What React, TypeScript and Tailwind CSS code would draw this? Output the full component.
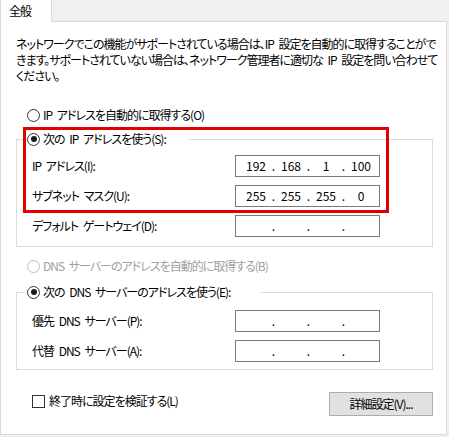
import React from "react";

const font = "font-['Noto_Sans_CJK_JP','Noto_Sans',sans-serif] [font-feature-settings:'palt'] tracking-[-1px] [word-spacing:3px]";

function Radio({ checked, disabled }: { checked?: boolean; disabled?: boolean }) {
  return (
    <span
      className={`w-[13px] h-[13px] rounded-full border flex items-center justify-center shrink-0 bg-white ${
        disabled ? "border-[#bcbcbc]" : "border-[#333333]"
      }`}
    >
      {checked && <span className="w-[6px] h-[6px] rounded-full bg-[#1a1a1a]" />}
    </span>
  );
}

function IpBox({ parts }: { parts?: string[] }) {
  const p = parts || ["", "", "", ""];
  return (
    <div className="w-[145px] h-[22px] border border-[#7a7a7a] bg-white flex items-center pl-[5px] text-[12px] leading-none tracking-normal">
      {p.map((v, i) => (
        <React.Fragment key={i}>
          <span className="w-[30px] text-center">{v}</span>
          {i < 3 && <span className="w-[5px] text-center">.</span>}
        </React.Fragment>
      ))}
    </div>
  );
}

function Row({ label, parts }: { label: string; parts?: string[] }) {
  return (
    <div className="flex items-center h-[22px]">
      <span className="w-[203px] whitespace-nowrap">{label}</span>
      <IpBox parts={parts} />
    </div>
  );
}

export default function App() {
  return (
    <div className={`w-[449px] h-[437px] bg-[#f0f0f0] text-[12px] leading-[16px] text-black relative overflow-hidden ${font}`}>
      {/* tabs */}
      <div className="flex h-[22px]">
        <div className="w-[52px] bg-white border-l border-r border-[#d9d9d9] pl-[8px] pt-[3px]">全般</div>
        <div className="w-[395px] border-b border-[#d9d9d9]" />
      </div>

      {/* panel */}
      <div className="w-[447px] h-[413px] bg-white border-l border-r border-b border-[#d9d9d9] relative">
        <p className="pl-[15px] pt-[14px] whitespace-nowrap">
          ネットワークでこの機能がサポートされている場合は、IP 設定を自動的に取得することがで
          <br />
          きます。サポートされていない場合は、ネットワーク管理者に適切な IP 設定を問い合わせて
          <br />
          ください。
        </p>

        <div className="flex items-center gap-[3px] pl-[26px] mt-[23px] h-[16px]">
          <Radio />
          <span>IP アドレスを自動的に取得する(O)</span>
        </div>

        <fieldset className="ml-[15px] w-[417px] border border-[#dcdcdc] pb-[9px] mt-[8px]">
          <legend className="ml-[10px] pr-[22px] h-[16px]">
            <span className="flex items-center gap-[3px] bg-white">
              <Radio checked />
              <span>次の IP アドレスを使う(S):</span>
            </span>
          </legend>
          <div className="flex flex-col gap-[8px] mt-[8px] pl-[15px]">
            <Row label="IP アドレス(I):" parts={["192", "168", "1", "100"]} />
            <Row label="サブネット マスク(U):" parts={["255", "255", "255", "0"]} />
            <Row label="デフォルト ゲートウェイ(D):" />
          </div>
        </fieldset>

        <div className="flex items-center gap-[3px] pl-[26px] mt-[11px] h-[16px] text-[#a0a0a0]">
          <Radio disabled />
          <span>DNS サーバーのアドレスを自動的に取得する(B)</span>
        </div>

        <fieldset className="ml-[15px] w-[417px] border border-[#dcdcdc] pb-[7px] mt-[10px]">
          <legend className="ml-[10px] pr-[30px] h-[16px]">
            <span className="flex items-center gap-[3px] bg-white">
              <Radio checked />
              <span>次の DNS サーバーのアドレスを使う(E):</span>
            </span>
          </legend>
          <div className="flex flex-col gap-[8px] mt-[10px] pl-[15px]">
            <Row label="優先 DNS サーバー(P):" />
            <Row label="代替 DNS サーバー(A):" />
          </div>
        </fieldset>

        <div className="flex items-center justify-between pl-[31px] pr-[13px] mt-[22px]">
          <div className="flex items-center gap-[4px] -mt-[6px]">
            <span className="w-[13px] h-[13px] border border-[#333333] bg-white" />
            <span>終了時に設定を検証する(L)</span>
          </div>
          <button className="w-[104px] h-[24px] bg-[#e1e1e1] border border-[#adadad] flex items-center justify-center">
            詳細設定(V)...
          </button>
        </div>

        {/* red highlight */}
        <div className="absolute left-[22px] top-[105px] w-[366px] h-[86px] border-[3px] border-[#e00000] pointer-events-none" />
      </div>
    </div>
  );
}
